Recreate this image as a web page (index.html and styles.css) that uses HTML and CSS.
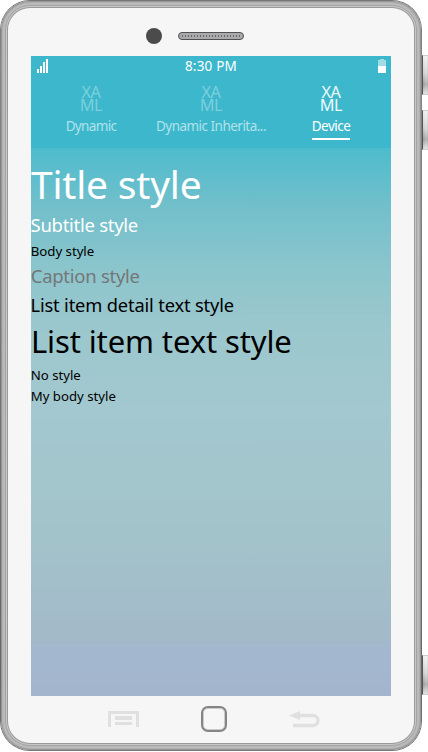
FILE: index.html
```html
<!DOCTYPE html>
<html lang="en">
<head>
<meta charset="utf-8">
<title>Device styles</title>
<link rel="stylesheet" href="styles.css">
</head>
<body>
<div class="stage">
  <i class="key key-up"></i><i class="key key-down"></i><i class="key key-power"></i>
  <div class="phone">
    <div class="face">
      <div class="top">
        <span class="camera"></span>
        <span class="speaker"><i></i></span>
      </div>
      <main class="screen">
        <header class="header">
          <div class="status">
            <svg class="signal" width="12" height="14" viewBox="0 0 12 14"><path fill="#fff" d="M0 10h2v4H0zM3 7h2v7H3zM6 3h2v11H6zM9 0h2v14H9z"/></svg>
            <span class="clock">8:30 PM</span>
            <svg class="battery" width="8" height="14" viewBox="0 0 8 14"><path fill="#9fdce6" d="M2 0h4v1h2v6H0V1h2z"/><path fill="#fff" d="M0 7h8v7H0z"/></svg>
          </div>
          <nav class="tabs">
            <div class="tab"><div class="icon"><span>XA</span><span>ML</span></div><span class="label dynamic">Dynamic</span></div>
            <div class="tab"><div class="icon"><span>XA</span><span>ML</span></div><span class="label">Dynamic Inherita...</span></div>
            <div class="tab active"><div class="icon"><span>XA</span><span>ML</span></div><span class="label">Device</span></div>
          </nav>
        </header>
        <section class="list">
          <div class="title">Title style</div>
          <div class="subtitle">Subtitle style</div>
          <div class="body">Body style</div>
          <div class="caption">Caption style</div>
          <div class="detail">List item detail text style</div>
          <div class="item">List item text style</div>
          <div class="plain">No style</div>
          <div class="mine">My body style</div>
        </section>
      </main>
      <div class="bottom">
        <svg class="menu" width="31" height="16" viewBox="0 0 31 16"><path fill="#e0e0e0" d="M0 0h31v16h-3V3H3v13H0zM7 5h17v4H7zM7 11h17v3H7z"/></svg>
        <span class="home"></span>
        <svg class="back" width="31" height="17" viewBox="0 0 31 17"><path fill="none" stroke="#e0e0e0" stroke-width="3.4" d="M9 4.5h15a4.9 4.9 0 0 1 0 10H4"/><path fill="#e0e0e0" d="M0 4.5L11 0v9z"/></svg>
      </div>
    </div>
  </div>
</div>
</body>
</html>
```
FILE: styles.css
```css
* { box-sizing: border-box; }
body { margin: 0; background: #fff; font-family: "Noto Sans", sans-serif; overflow: hidden; }
.stage { position: relative; width: 428px; height: 752px; }
.key {
  position: absolute; left: 422px; width: 8px; height: 40px;
  border: 1px solid #ccc; border-left: 1px solid #555;
  background: linear-gradient(90deg, transparent, rgba(255,255,255,.35) 65%, rgba(80,80,80,.3)), linear-gradient(#eee, #ccc 45%, #999 75%, #ddd);
}
.key-up { top: 55px; }
.key-down { top: 110px; }
.key-power { top: 655px; }
.phone {
  position: relative; width: 422px; height: 751px; padding: 1px; border-radius: 30px;
  background: linear-gradient(#777, #858585 8%, #666 90%, #777);
}
.face {
  height: 749px; border-radius: 29px; background: #f6f6f6;
  display: flex; flex-direction: column; align-items: center;
  box-shadow: inset 0 0 0 1px #979797, inset 0 0 0 2px #b0b0b0, inset 0 0 0 4px #bababa, inset 0 0 0 5px #a4a4a4, inset 0 0 0 6px #c8c8c8, inset 0 0 0 7px #9a9a9a;
}
.top { width: 360px; height: 55px; padding: 27px 0 0 115px; display: flex; }
.camera { width: 16px; height: 16px; border-radius: 50%; background: #4b4b4b; }
.speaker {
  width: 66px; height: 8px; margin: 4px 0 0 16px; border: 1px solid #505055; border-radius: 4px;
  background: #aaa; padding: 2px 3px;
}
.speaker i { display: block; height: 2px; background: repeating-linear-gradient(90deg, #666 0 1px, #aaa 1px 3px); }
.screen {
  width: 360px; height: 640px;
  background: linear-gradient(#3cb7cc 0, #3db8cc 10%, #50bccd 15%, #70bfcb 23%, #8bc5cc 33%, #9ac7cd 42%, #a3c8cf 55%, #a3c3ca 75%, #a3bac9 91%, #a3b8cf 93%, #a3b5cd 100%);
}
.header { height: 92px; background: #3cb7cc; color: #fff; }
.status { height: 21px; display: flex; justify-content: space-between; padding: 3px 5px 0 6px; }
.clock { font-size: 13.5px; line-height: 14px; letter-spacing: .2px; margin-left: -5px; }
.tabs { display: grid; grid-template-columns: repeat(3, 120px); }
.tab { display: flex; flex-direction: column; align-items: center; color: #b1e2eb; padding-top: 9px; }
.icon { display: flex; flex-direction: column; font-size: 16.3px; line-height: 13px; height: 26px; text-align: center; color: #7ecfdd; letter-spacing: -.4px; }
.label { margin-top: 5px; height: 23px; font-size: 13.5px; line-height: 18px; letter-spacing: -.52px; white-space: nowrap; }
.dynamic { letter-spacing: -.65px; }
.active { color: #fff; }
.active .icon { color: #eefafb; }
.active .label { border-bottom: 2px solid #fff; }
.list { padding-top: 9px; color: #000; white-space: nowrap; }
.title { color: #fff; font-size: 39px; line-height: 53px; letter-spacing: -.2px; }
.subtitle { color: #fff; font-size: 18.5px; line-height: 30px; letter-spacing: -.27px; text-indent: -.5px; }
.body { font-size: 13.3px; line-height: 22px; letter-spacing: -.05px; text-indent: -.3px; }
.caption { color: #747778; font-size: 18.5px; line-height: 28px; letter-spacing: -.27px; text-indent: -.3px; }
.detail { font-size: 18.3px; line-height: 29px; letter-spacing: -.16px; text-indent: -.5px; }
.item { font-size: 31px; line-height: 45px; letter-spacing: -.12px; }
.plain { font-size: 13.2px; line-height: 22px; text-indent: -.3px; }
.mine { font-size: 13.2px; line-height: 21px; text-indent: -.3px; }
.bottom { width: 360px; height: 45px; display: flex; padding: 10px 0 0 77px; align-items: flex-start; }
.menu { margin-top: 5px; }
.home {
  width: 26px; height: 26px; margin-left: 62px; border: 2px solid #858585; border-radius: 7px;
  background: #f7f7f7; box-shadow: inset 0 0 0 1px #ccc;
}
.back { margin: 5px 0 0 62px; }
```
